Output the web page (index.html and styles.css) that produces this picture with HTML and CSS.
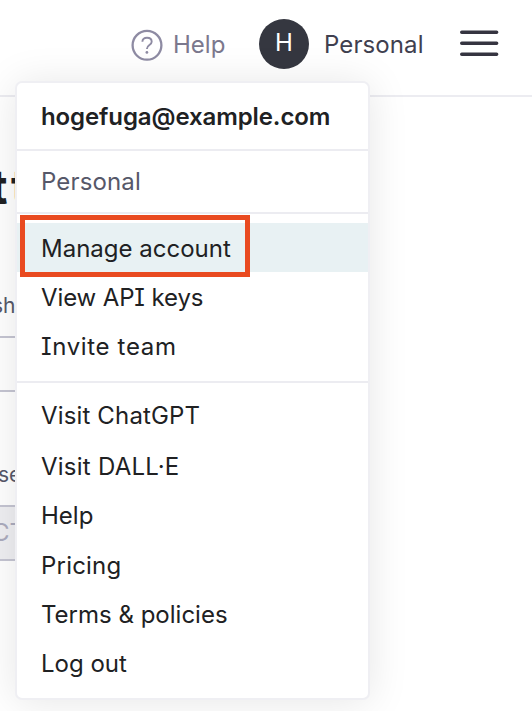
FILE: index.html
```html
<!DOCTYPE html>
<html lang="en">
<head>
<meta charset="utf-8">
<title>Account</title>
<link rel="stylesheet" href="styles.css">
</head>
<body>
<header class="topbar">
  <svg class="help-icon" viewBox="0 0 32 32" fill="none" stroke="#8e8ba3" stroke-width="2.3">
    <circle cx="16" cy="16.3" r="14.4"/>
    <path stroke-width="1.9" d="M11.4 12.8C11.4 10.2 13.3 8.8 16 8.8c2.8 0 4.7 1.5 4.7 3.9 0 3.5-4.8 3.3-4.8 7.2"/>
    <circle cx="15.9" cy="23.4" r="1.4" fill="#8e8ba3" stroke="none"/>
  </svg>
  <span class="help-label">Help</span>
  <span class="avatar">H</span>
  <span class="account-name">Personal</span>
  <svg class="burger" viewBox="0 0 40 28" stroke="#353440" stroke-width="3.6" stroke-linecap="round">
    <path d="M2.8 2.2H37.6M2.8 13.2H37.6M2.8 24.2H37.6"/>
  </svg>
</header>
<main class="page">
  <h1 class="title">tt</h1>
  <p class="note">sh</p>
  <div class="field"></div>
  <p class="note usage">se</p>
  <div class="field disabled">CT</div>
</main>
<nav class="menu">
  <div class="email">hogefuga@example.com</div>
  <div class="org">Personal</div>
  <ul class="group actions">
    <li class="item active">Manage account<span class="marker"></span></li>
    <li class="item api">View API keys</li>
    <li class="item invite">Invite team</li>
  </ul>
  <ul class="group links">
    <li class="item first">Visit ChatGPT</li>
    <li class="item dalle">Visit DALL·E</li>
    <li class="item">Help</li>
    <li class="item pricing">Pricing</li>
    <li class="item">Terms &amp; policies</li>
    <li class="item">Log out</li>
  </ul>
</nav>
</body>
</html>
```
FILE: styles.css
```css
* { box-sizing: border-box; }
body {
  margin: 0;
  width: 532px;
  height: 711px;
  overflow: hidden;
  position: relative;
  background: #fff;
  color: #202123;
  font: 24px/30px Inter, "Liberation Sans", sans-serif;
}
.topbar {
  display: flex;
  align-items: center;
  height: 97px;
  padding: 0 33px 9px 131px;
  border-bottom: 2px solid #ececf1;
}
.help-icon { width: 32px; height: 32px; margin-top: 4px; }
.help-label { width: 86px; padding-left: 10px; color: #7b788d; }
.help-label, .account-name { margin-top: 3px; }
.avatar {
  display: flex;
  align-items: center;
  justify-content: center;
  width: 50px;
  height: 50px;
  margin: 1px 0 0 10px;
  padding-bottom: 1px;
  border-radius: 50%;
  background: #353740;
  color: #fff;
}
.account-name { padding-left: 15px; color: #40404f; letter-spacing: .1px; }
.burger { width: 40px; height: 28px; margin: 2px 0 0 auto; }

.page { width: 16px; overflow: hidden; white-space: nowrap; color: #565869; }
.title { margin: 62px 0 0 -10px; font-size: 48px; line-height: 56px; font-weight: 700; letter-spacing: 5px; color: #202123; }
.note { margin: 76px 0 0 -8px; font-size: 21px; line-height: 30px; }
.field { height: 56px; margin-top: 15px; border: solid #c5c5d2; border-width: 2px 0; }
.usage { margin: 68px 0 0 -2px; }
.disabled { padding: 11px 0; text-indent: -8px; background: #efeff2; color: #acacbe; }

.menu {
  position: absolute;
  left: 15px;
  top: 81px;
  width: 355px;
  height: 619px;
  border: 2px solid #efeff3;
  border-radius: 7px;
  background: #fff;
  box-shadow: 0 2px 40px rgba(0, 0, 0, .1);
}
.email { height: 68px; padding: 19px 24px 0; border-bottom: 2px solid #ececf1; font-weight: 600; letter-spacing: -.1px; white-space: nowrap; }
.org { height: 63px; padding: 16px 24px 0; border-bottom: 2px solid #ececf1; color: #565869; letter-spacing: .15px; }
.group { margin: 0; padding: 9px 0; list-style: none; }
.actions { height: 169px; border-bottom: 2px solid #ececf1; }
.item { position: relative; height: 49.3px; padding: 11px 24px 0; white-space: nowrap; }
.links .item { padding-top: 9px; }
.links .first { height: 51px; letter-spacing: .15px; }
.active { background: #e8f1f3; }
.api { letter-spacing: -.12px; }
.invite { padding-top: 10px; letter-spacing: .65px; }
.dalle { letter-spacing: .25px; }
.pricing { letter-spacing: .2px; }
.api, .invite { font-feature-settings: "cv08" 1; }
.marker {
  position: absolute;
  left: 3px;
  top: -8px;
  width: 230px;
  height: 62px;
  border: 5px solid #e94a20;
}
```
